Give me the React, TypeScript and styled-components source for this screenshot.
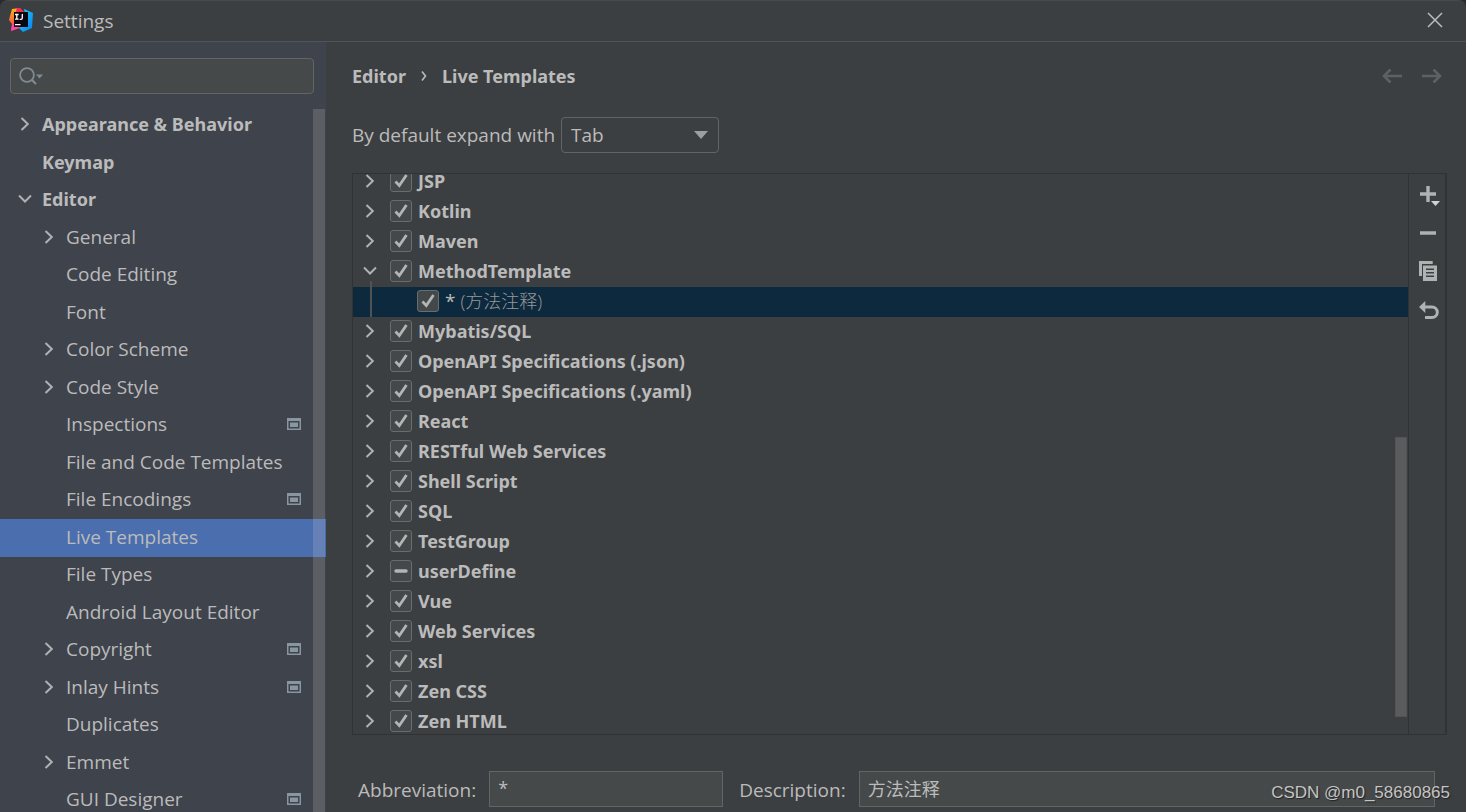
import React from "react";
import styled, { createGlobalStyle, css } from "styled-components";

const c = {
  panel: "#3c3f41",
  sidebar: "#3f434c",
  field: "#45494a",
  fieldLine: "#646464",
  line: "#323232",
  text: "#bbbbbb",
  icon: "#afb1b3",
  disabled: "#5e6062",
  accent: "#4b6eaf",
  treeSelected: "#0d293e",
};

const strong = css`
  font-family: "Noto Sans", "Noto Sans CJK SC", sans-serif;
  font-size: 18px;
  font-weight: 700;
`;

const Global = createGlobalStyle`
  *, *::before, *::after { box-sizing: border-box; }
  html { background: #2b2b2b; }
  body { margin: 0; overflow: hidden; }
  body, input, select, button {
    font-family: "Open Sans", "Noto Sans CJK SC", sans-serif;
    font-size: 19px;
    font-weight: 400;
    line-height: 24px;
    color: ${c.text};
  }
`;

const Window = styled.div`
  position: relative;
  display: flex;
  flex-direction: column;
  height: 100vh;
  background: ${c.panel};
  border-top: 1px solid #47494b;
  border-radius: 8px 8px 0 0;
  overflow: hidden;
`;

const TitleBar = styled.header`
  display: flex;
  align-items: center;
  gap: 10px;
  flex: none;
  height: 41px;
  padding: 0 20px 2px 9px;
  border-bottom: 1px solid #515456;
`;

const Title = styled.h1`
  flex: 1;
  margin: 0;
  padding-top: 2px;
  font-size: 19px;
  font-weight: 400;
`;

const IconButton = styled.button`
  display: grid;
  place-items: center;
  flex: none;
  padding: 0;
  border: 0;
  background: none;
  color: ${c.icon};
  svg { display: block; }
  &:disabled { color: ${c.disabled}; }
`;

const Body = styled.div`
  display: flex;
  flex: 1;
  min-height: 0;
`;

const Sidebar = styled.aside`
  display: flex;
  flex-direction: column;
  flex: none;
  width: 326px;
  padding-top: 16px;
  background: ${c.sidebar};
`;

const SearchBox = styled.label`
  display: flex;
  align-items: center;
  flex: none;
  height: 36px;
  margin: 0 12px 13px 10px;
  padding-left: 8px;
  border: 1px solid ${c.fieldLine};
  border-radius: 4px;
  background: ${c.field};
  color: #7f8b91;
`;

const SearchInput = styled.input`
  flex: 1;
  min-width: 0;
  border: 0;
  outline: 0;
  background: none;
`;

const NavScroll = styled.nav`
  position: relative;
  flex: 1;
  min-height: 0;
  overflow: hidden;
`;

const NavList = styled.ul`
  display: grid;
  grid-auto-rows: 37px 38px;
  margin: 0;
  padding: 0;
  list-style: none;
`;

const NavItem = styled.a<{ $depth: number; $selected?: boolean }>`
  display: flex;
  align-items: center;
  gap: 8px;
  height: 100%;
  padding: 0 25px 3px ${(p) => 17 + p.$depth * 24}px;
  color: ${c.text};
  text-decoration: none;
  white-space: nowrap;
  ${(p) => !p.$depth && strong}
  background: ${(p) => (p.$selected ? c.accent : "none")};
`;

const NavLabel = styled.span`
  flex: 1;
  padding-left: 1px;
`;

const Thumb = styled.div<{ $side: "nav" | "tree" }>`
  position: absolute;
  width: 12px;
  ${(p) =>
    p.$side === "nav"
      ? css`
          top: 2px;
          right: 1px;
          bottom: 0;
          background: rgba(204, 204, 204, 0.2);
        `
      : css`
          top: 47%;
          right: 1px;
          height: 50%;
          background: #595b5d;
          border: 1px solid #525456;
        `}
`;

const ChevronBox = styled.span`
  display: grid;
  place-items: center;
  flex: none;
  width: 16px;
  height: 16px;
  color: ${c.icon};
`;

const Main = styled.main`
  display: flex;
  flex-direction: column;
  flex: 1;
  min-width: 0;
  padding: 20px 19px 5px 26px;
`;

const TopRow = styled.div`
  display: flex;
  align-items: center;
  justify-content: space-between;
  height: 28px;
  padding-right: 5px;
`;

const Crumbs = styled.div`
  display: flex;
  align-items: center;
  gap: 15px;
  ${strong}
`;

const NavArrows = styled.div`
  display: flex;
  gap: 20px;
`;

const ExpandRow = styled.div`
  display: flex;
  align-items: center;
  gap: 6px;
  margin: 27px 0 20px;
`;

const SelectBox = styled.div`
  display: grid;
  grid-template-columns: 1fr 25px;
  align-items: center;
  width: 158px;
  svg {
    grid-area: 1 / 2;
    pointer-events: none;
  }
`;

const Select = styled.select`
  grid-area: 1 / 1 / 2 / 3;
  appearance: none;
  height: 36px;
  padding: 0 9px;
  border: 1px solid ${c.fieldLine};
  border-radius: 4px;
  background: ${c.panel};
`;

const TreePanel = styled.section`
  display: flex;
  flex: 1;
  min-height: 0;
  border: 1px solid ${c.line};
  border-right-width: 2px;
`;

const TreeView = styled.div`
  position: relative;
  flex: 1;
  overflow: hidden;
`;

const TreeRows = styled.ul`
  margin: -7px 0 0;
  padding: 0;
  list-style: none;
`;

const TreeRow = styled.li<{ $child?: boolean }>`
  position: relative;
  display: flex;
  align-items: center;
  height: 30px;
  padding: 0 0 2px ${(p) => (p.$child ? 64 : 9)}px;
  ${(p) => !p.$child && strong}
  background: ${(p) => (p.$child ? c.treeSelected : "none")};
`;

const Guide = styled.span`
  position: absolute;
  left: 17px;
  top: -6px;
  bottom: 0;
  width: 2px;
  background: #505355;
`;

const Expander = styled(IconButton)`
  width: 16px;
  height: 16px;
  margin-right: 12px;
`;

const CheckLabel = styled.label`
  display: flex;
  align-items: center;
  gap: 6px;
  white-space: pre;
`;

const CheckStack = styled.span`
  display: grid;
  place-items: center;
  svg {
    grid-area: 1 / 1;
    pointer-events: none;
  }
`;

const CheckInput = styled.input`
  grid-area: 1 / 1;
  appearance: none;
  width: 22px;
  height: 22px;
  margin: 0;
  border: 1px solid #6b6b6b;
  border-radius: 3px;
  background: #43494a;
`;

const Muted = styled.span`
  font-size: 18px;
  font-weight: 300;
  color: #979797;
`;

const Tools = styled.div`
  display: flex;
  flex-direction: column;
  flex: none;
  width: 37px;
  padding-top: 2px;
  border-left: 1px solid ${c.line};
`;

const ToolButton = styled(IconButton)`
  height: 38px;
`;

const Form = styled.form`
  display: flex;
  align-items: center;
  margin: 36px 12px 0 6px;
`;

const FieldLabel = styled.label`
  flex: none;
  padding-top: 2px;
`;

const Field = styled.input<{ $grow?: boolean }>`
  ${(p) => (p.$grow ? "flex: 1;" : "width: 234px; margin-right: 16px;")}
  min-width: 0;
  height: 36px;
  margin-left: 13px;
  padding: 0 8px 2px;
  border: 1px solid ${c.fieldLine};
  border-radius: 0;
  outline: 0;
  background: ${c.field};
  font-size: 18px;
`;

const Watermark = styled.div`
  position: absolute;
  right: 16px;
  bottom: 7px;
  font-family: "Liberation Sans", Roboto, sans-serif;
  font-size: 17px;
  color: #c4c4c4;
  text-shadow: 1px 1px 1px #222222;
`;

const Chevron = ({ open }: { open?: boolean }) => (
  <svg width="16" height="16" viewBox="0 0 16 16" fill="none" stroke="currentColor" strokeWidth="2">
    <path d={open ? "M2 4.5 8 10.5 14 4.5" : "M4.5 2 10.8 8 4.5 14"} />
  </svg>
);

const Logo = () => (
  <svg width="24" height="24" viewBox="0 0 24 24">
    <defs>
      <linearGradient id="warm" x1="0" y1="0" x2="0" y2="1">
        <stop offset="0" stopColor="#fdb60d" />
        <stop offset="0.5" stopColor="#f9732e" />
        <stop offset="1" stopColor="#ff318c" />
      </linearGradient>
      <linearGradient id="cool" x1="0" y1="0" x2="1" y2="1">
        <stop offset="0" stopColor="#21d7e8" />
        <stop offset="1" stopColor="#087cfa" />
      </linearGradient>
    </defs>
    <path d="M3 1 11 0 13 6 7 12 8 20 2 23 3 16 0 12 1 8Z" fill="url(#warm)" />
    <path d="M8 0h3l4 4-3 5-6-3Z" fill="#fe2857" />
    <path d="M15 1 24 5 23 20 14 24 10 20 18 14Z" fill="url(#cool)" />
    <path d="M2 23 3 17 8 16 11 20Z" fill="#ff45a8" />
    <path d="M5 4h14v15H5z" fill="#0c0610" />
    <path d="M6 6.5h3.6M6 11.2h3.6M7.8 6.5v5M13.3 5.9v4q0 1.4-1.3 1.4H10.7M6 16.7h5.5" fill="none" stroke="#fff" strokeWidth="1.3" />
  </svg>
);

const ProjectIcon = () => (
  <svg width="14" height="12" viewBox="0 0 14 12">
    <path fillRule="evenodd" d="M0 0h14v12H0zM1.5 3v7.5h11V3z" fill="#8796a0" />
    <path d="M3 4.5h8v4.5H3z" fill="#8796a0" />
  </svg>
);

const Caret = ({ w, h }: { w: number; h: number }) => (
  <svg width={w} height={h} viewBox={`0 0 ${w} ${h}`}>
    <path d={`M0 0h${w}L${w / 2} ${h}z`} fill="#9c9fa1" />
  </svg>
);

const CheckMark = ({ mixed }: { mixed?: boolean }) => (
  <svg width="22" height="22" viewBox="0 0 22 22" fill="none" stroke="#b4b4b4">
    {mixed ? <path d="M6 11h10" strokeWidth="3.4" strokeLinecap="round" /> : <path d="M5.5 11.5 9.3 15.6 16.5 5" strokeWidth="2.8" />}
  </svg>
);

type Nav = { label: string; depth: number; state?: "open" | "closed"; project?: boolean; selected?: boolean };

const nav: Nav[] = [
  { label: "Appearance & Behavior", depth: 0, state: "closed" },
  { label: "Keymap", depth: 0 },
  { label: "Editor", depth: 0, state: "open" },
  { label: "General", depth: 1, state: "closed" },
  { label: "Code Editing", depth: 1 },
  { label: "Font", depth: 1 },
  { label: "Color Scheme", depth: 1, state: "closed" },
  { label: "Code Style", depth: 1, state: "closed" },
  { label: "Inspections", depth: 1, project: true },
  { label: "File and Code Templates", depth: 1 },
  { label: "File Encodings", depth: 1, project: true },
  { label: "Live Templates", depth: 1, selected: true },
  { label: "File Types", depth: 1 },
  { label: "Android Layout Editor", depth: 1 },
  { label: "Copyright", depth: 1, state: "closed", project: true },
  { label: "Inlay Hints", depth: 1, state: "closed", project: true },
  { label: "Duplicates", depth: 1 },
  { label: "Emmet", depth: 1, state: "closed" },
  { label: "GUI Designer", depth: 1, project: true },
];

const groups = [
  "JSP", "Kotlin", "Maven", "MethodTemplate", "Mybatis/SQL", "OpenAPI Specifications (.json)",
  "OpenAPI Specifications (.yaml)", "React", "RESTful Web Services", "Shell Script", "SQL", "TestGroup",
  "userDefine", "Vue", "Web Services", "xsl", "Zen CSS", "Zen HTML",
];

const Check = ({ mixed, children }: { mixed?: boolean; children: React.ReactNode }) => (
  <CheckLabel>
    <CheckStack>
      <CheckInput
        type="checkbox"
        defaultChecked={!mixed}
        ref={(el: HTMLInputElement | null) => {
          if (el) el.indeterminate = !!mixed;
        }}
      />
      <CheckMark mixed={mixed} />
    </CheckStack>
    <span>{children}</span>
  </CheckLabel>
);

export default function App() {
  return (
    <Window>
      <Global />
      <TitleBar>
        <Logo />
        <Title>Settings</Title>
        <IconButton aria-label="Close">
          <svg width="22" height="22" viewBox="0 0 22 22" fill="none" stroke="#bbbbbb" strokeWidth="1.5">
            <path d="M4 4 18 18M18 4 4 18" />
          </svg>
        </IconButton>
      </TitleBar>
      <Body>
        <Sidebar>
          <SearchBox>
            <svg width="26" height="20" viewBox="0 0 26 20" fill="none" stroke="currentColor" strokeWidth="1.8">
              <circle cx="8" cy="9" r="6.9" />
              <path d="M12.5 13.5 17 18" strokeWidth="2.2" />
              <path d="M17 8.5h7l-3.5 4z" fill="currentColor" stroke="none" />
            </svg>
            <SearchInput type="text" aria-label="Search settings" />
          </SearchBox>
          <NavScroll>
            <NavList>
              {nav.map((n) => (
                <li key={n.label}>
                  <NavItem href="#" $depth={n.depth} $selected={n.selected}>
                    <ChevronBox>{n.state && <Chevron open={n.state === "open"} />}</ChevronBox>
                    <NavLabel>{n.label}</NavLabel>
                    {n.project && <ProjectIcon />}
                  </NavItem>
                </li>
              ))}
            </NavList>
            <Thumb $side="nav" />
          </NavScroll>
        </Sidebar>
        <Main>
          <TopRow>
            <Crumbs>
              <span>Editor</span>
              <svg width="6" height="10" viewBox="0 0 6 10" fill="none" stroke={c.text} strokeWidth="1.6">
                <path d="M1 .5 4.5 5 1 9.5" />
              </svg>
              <span>Live Templates</span>
            </Crumbs>
            <NavArrows>
              <IconButton aria-label="Back" disabled>
                <svg width="20" height="16" viewBox="0 0 20 16" fill="none" stroke="currentColor" strokeWidth="2.6">
                  <path d="M20 8H2M8.5 1.5 2 8l6.5 6.5" />
                </svg>
              </IconButton>
              <IconButton aria-label="Forward" disabled>
                <svg width="20" height="16" viewBox="0 0 20 16" fill="none" stroke="currentColor" strokeWidth="2.6">
                  <path d="M0 8h18M11.5 1.5 18 8l-6.5 6.5" />
                </svg>
              </IconButton>
            </NavArrows>
          </TopRow>
          <ExpandRow>
            <label htmlFor="expand">By default expand with</label>
            <SelectBox>
              <Select id="expand" defaultValue="Tab">
                <option>Tab</option>
                <option>Enter</option>
                <option>Space</option>
              </Select>
              <Caret w={14} h={8} />
            </SelectBox>
          </ExpandRow>
          <TreePanel>
            <TreeView>
              <TreeRows>
                {groups.map((g) => (
                  <React.Fragment key={g}>
                    <TreeRow>
                      <Expander aria-label={g}>
                        <Chevron open={g === "MethodTemplate"} />
                      </Expander>
                      <Check mixed={g === "userDefine"}>{g}</Check>
                    </TreeRow>
                    {g === "MethodTemplate" && (
                      <TreeRow $child>
                        <Guide />
                        <Check>
                          * <Muted>(方法注释)</Muted>
                        </Check>
                      </TreeRow>
                    )}
                  </React.Fragment>
                ))}
              </TreeRows>
              <Thumb $side="tree" />
            </TreeView>
            <Tools>
              <ToolButton aria-label="Add">
                <svg width="26" height="26" viewBox="0 0 26 26">
                  <path d="M12.3 4h3.4v6.3H22v3.4h-6.3V20h-3.4v-6.3H6v-3.4h6.3z" fill="currentColor" />
                  <path d="M17 19h9l-4.5 5z" fill="#d0d2d3" />
                </svg>
              </ToolButton>
              <ToolButton aria-label="Remove">
                <svg width="26" height="26" viewBox="0 0 26 26">
                  <path d="M6 11.3h16v3.4H6z" fill="currentColor" />
                </svg>
              </ToolButton>
              <ToolButton aria-label="Duplicate">
                <svg width="26" height="26" viewBox="0 0 26 26">
                  <path d="M5 3h13.7v3H8v12H5z" fill="currentColor" />
                  <path fillRule="evenodd" d="M9 7.5h14V23H9zM12 10.5v1.5h8v-1.5zM12 14v1.5h8V14zM12 17.5V19h8v-1.5z" fill="currentColor" />
                </svg>
              </ToolButton>
              <ToolButton aria-label="Restore defaults">
                <svg width="26" height="26" viewBox="0 0 26 26">
                  <path d="M5 11 11.3 5v12z" fill="currentColor" />
                  <path d="M10 11h8a5.3 5.3 0 0 1 0 10.6H11" fill="none" stroke="currentColor" strokeWidth="3" />
                </svg>
              </ToolButton>
            </Tools>
          </TreePanel>
          <Form>
            <FieldLabel htmlFor="abbr">Abbreviation:</FieldLabel>
            <Field id="abbr" defaultValue="*" />
            <FieldLabel htmlFor="desc">Description:</FieldLabel>
            <Field id="desc" $grow defaultValue="方法注释" />
          </Form>
        </Main>
      </Body>
      <Watermark>CSDN @m0_58680865</Watermark>
    </Window>
  );
}
